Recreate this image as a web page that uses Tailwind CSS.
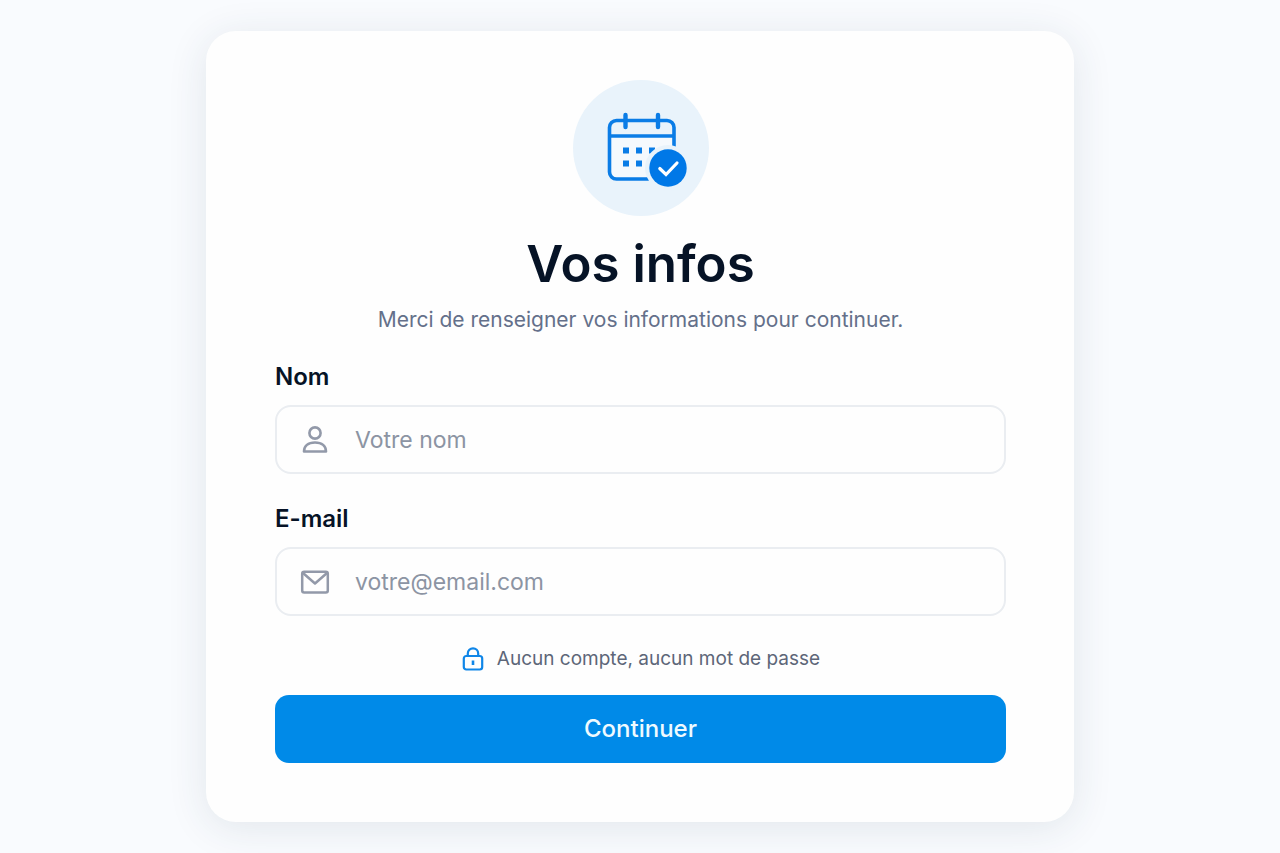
<!DOCTYPE html>
<html lang="fr">
<head>
<meta charset="utf-8">
<meta name="viewport" content="width=device-width, initial-scale=1">
<title>Vos infos</title>
<script src="https://cdn.jsdelivr.net/npm/@tailwindcss/browser@4"></script>
</head>
<body class="flex min-h-screen items-center justify-center bg-[#f9fbfe] px-4 py-[31px] font-[Inter,sans-serif] text-[#061326]">
<main class="w-full max-w-[868px] rounded-[30px] bg-[#fefefe] pr-[68px] pl-[69px] pt-[49px] pb-[59px] shadow-[0_6px_40px_rgba(40,65,85,0.11)]">
  <div class="mx-auto flex size-[136px] items-center justify-center rounded-full bg-[#e9f3fb]">
    <svg class="size-[136px]" viewBox="0 0 136 136" fill="none" aria-hidden="true">
      <path d="M36.500 56h64.500v36a7 7 0 0 1-7 7H43.500a7 7 0 0 1-7-7z" fill="#f5f9fd"/>
      <rect x="36.500" y="40.500" width="64.500" height="58.500" rx="7" stroke="#0a7ce6" stroke-width="3.600"/>
      <path d="M36.500 56H101" stroke="#0a7ce6" stroke-width="3.400"/>
      <path d="M52.500 35v12M85 35v12" stroke="#0a7ce6" stroke-width="4.400" stroke-linecap="round"/>
      <path d="M50 67.500h6v6h-6zM63 67.500h6v6h-6zM76 67.500h6v6h-6zM50 80.500h6v6h-6zM63 80.500h6v6h-6z" fill="#0a7ce6"/>
      <circle cx="95" cy="88" r="23" fill="#e9f3fb"/>
      <circle cx="95" cy="88" r="18.700" fill="#0078e7"/>
      <path d="m86.800 88.500 6.200 6L104 83" stroke="#fff" stroke-width="3.200" stroke-linecap="round"/>
    </svg>
  </div>
  <h1 class="mt-4 text-center text-[51px] leading-16 font-semibold">Vos infos</h1>
  <p class="mt-2 text-center text-[21px] leading-8 text-[#64708a]">Merci de renseigner vos informations pour continuer.</p>

  <form class="mt-[25px]">
    <label for="nom" class="block text-2xl leading-8 font-semibold">Nom</label>
    <div class="mt-3 flex h-[69px] items-center rounded-2xl border-2 border-[#eaedf1] bg-[#fefefe] pl-[22px] focus-within:border-[#0089e8]">
      <svg class="size-8 shrink-0" viewBox="0 0 32 32" fill="none" stroke="#9299a9" stroke-width="2.600" stroke-linejoin="round" aria-hidden="true">
        <circle cx="16" cy="9" r="5.600"/>
        <path d="M5 27.500c0-5.500 4-9 11-9s11 3.500 11 9z"/>
      </svg>
      <input id="nom" name="nom" type="text" placeholder="Votre nom" class="ml-6 h-full min-w-0 flex-1 bg-transparent pr-6 text-[23px] outline-none placeholder:text-[#8c94a3]">
    </div>

    <label for="email" class="mt-[29px] block text-2xl leading-8 font-semibold">E-mail</label>
    <div class="mt-3 flex h-[69px] items-center rounded-2xl border-2 border-[#eaedf1] bg-[#fefefe] pl-[22px] focus-within:border-[#0089e8]">
      <svg class="size-8 shrink-0" viewBox="0 0 32 32" fill="none" stroke="#9299a9" stroke-width="2.500" stroke-linejoin="round" aria-hidden="true">
        <rect x="3.200" y="5.800" width="25.600" height="20.600" rx="2"/>
        <path d="m4 7 12 10.500L28 7"/>
      </svg>
      <input id="email" name="email" type="email" placeholder="votre@email.com" class="ml-6 h-full min-w-0 flex-1 bg-transparent pr-6 text-[23px] outline-none placeholder:text-[#8c94a3]">
    </div>

    <p class="mt-[29px] flex items-center justify-center gap-3 text-[19px] leading-7 text-[#5d6678]">
      <svg class="size-6 shrink-0" viewBox="0 0 24 24" fill="none" stroke="#0f86e8" stroke-width="2.200" aria-hidden="true">
        <rect x="2.800" y="9" width="18.400" height="13.500" rx="2.500"/>
        <path d="M6.800 9V6.500a5.200 5.200 0 0 1 10.400 0V9"/>
        <path d="M12 13.500v4.500" stroke-width="2.600"/>
      </svg>
      Aucun compte, aucun mot de passe
    </p>
    <button type="button" class="mt-[22px] h-17 w-full cursor-pointer rounded-[14px] bg-[#008ae8] text-2xl font-medium text-[#effaff] hover:bg-[#007fd6]">Continuer</button>
  </form>
</main>
</body>
</html>
